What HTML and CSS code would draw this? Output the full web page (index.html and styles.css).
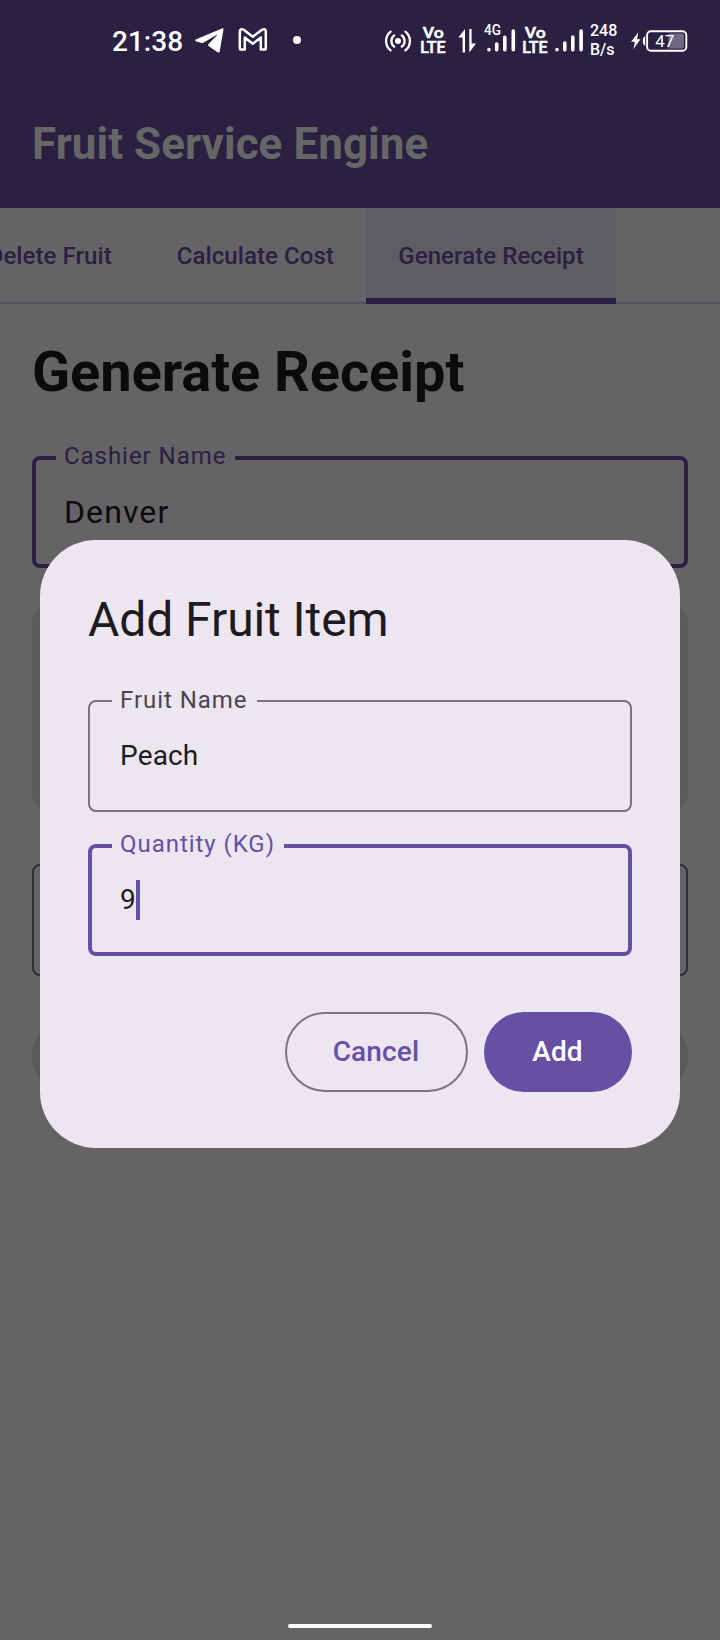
FILE: index.html
```html
<!DOCTYPE html>
<html lang="en">
<head>
<meta charset="utf-8">
<title>Fruit Service Engine</title>
<link rel="stylesheet" href="styles.css">
</head>
<body>
<div class="screen">
  <header class="app-header">
    <div class="status-bar">
      <span class="clock">21:38</span>
      <svg class="icon telegram" width="32" height="28" viewBox="0 0 32 28"><path d="M1.6 13.6 28.5 2.2Q29.6 1.9 29.5 3.3L25.7 25.4Q25.3 27.2 23.6 26.2L14.6 19.9Q13.4 19 14.5 17.9L23 9.2Q23.3 8.6 22.4 8.9L9.4 16.8Q8.4 17.3 7.4 17L1.8 15.2Q.6 14.5 1.6 13.6Z" fill="#fff"/></svg>
      <svg class="icon gmail" width="34" height="28" viewBox="0 0 34 28"><path d="M3.8 22.5V5.4Q4.4 2.4 7.4 3.6L16.8 10.7 26.4 3.6Q29.4 2.4 29.8 5.4V22.5Q29.8 23.5 28.8 23.5H24.8V11.6L16.8 17.7 8.8 11.6V23.5H4.8Q3.8 23.5 3.8 22.5Z" fill="none" stroke="#fff" stroke-width="2.5" stroke-linejoin="round"/></svg>
      <span class="dot"></span>
      <svg class="icon hotspot" width="28" height="28" viewBox="0 0 28 28" fill="none" stroke="#fff" stroke-width="2.3" stroke-linecap="round"><circle cx="14" cy="14" r="3" fill="#fff" stroke="none"/><path d="M10.2 8.4a7 7 0 0 0 0 11.2M17.8 8.4a7 7 0 0 1 0 11.2M6.6 4.6a12 12 0 0 0 0 18.8M21.4 4.6a12 12 0 0 1 0 18.8"/></svg>
      <svg class="icon volte" width="28" height="34" viewBox="0 0 28 34"><text class="outlined" x="2.8" y="14.6" font-size="15.5" textLength="21" lengthAdjust="spacingAndGlyphs">Vo</text><text class="outlined" x=".2" y="29.6" font-size="16" textLength="25.4" lengthAdjust="spacingAndGlyphs">LTE</text></svg>
      <svg class="icon arrows" width="20" height="28" viewBox="0 0 20 28"><path d="M7 2V25.6H4.6V10.6H.4ZM11.3 2h2.3v14.4h4.4L11.3 25.6Z" fill="#fff"/></svg>
      <svg class="icon cell" width="34" height="32" viewBox="0 0 34 32"><text x="0" y="13.4" font-size="14" textLength="17" lengthAdjust="spacingAndGlyphs">4G</text><g stroke="#fff" stroke-width="3.6" stroke-linecap="round"><path d="M5 27.6v.2M12.7 22v5.7M20.8 15.4v12.3M29.3 9v18.7"/></g></svg>
      <svg class="icon volte-two" width="28" height="34" viewBox="0 0 28 34"><text class="outlined" x="2.8" y="14.6" font-size="15.5" textLength="21" lengthAdjust="spacingAndGlyphs">Vo</text><text class="outlined" x=".2" y="29.6" font-size="16" textLength="25.4" lengthAdjust="spacingAndGlyphs">LTE</text></svg>
      <svg class="icon bars" width="31" height="32" viewBox="0 0 31 32"><g stroke="#fff" stroke-width="3.6" stroke-linecap="round"><path d="M3 27.6v.2M10.8 21v6.7M18.8 15v12.7M27.1 9v18.7"/></g></svg>
      <span class="speed"><span>248</span><span>B/s</span></span>
      <svg class="icon battery" width="58" height="26" viewBox="0 0 58 26"><path d="M8.4 4.3 1.1 13.8h3.8L3.5 21.1 10.5 11.3H7Z" fill="#fff"/><path d="M15.2 8.2Q12.8 8.6 12.8 13t2.4 4.6Z" fill="#fff"/><rect x="17.1" y="3.2" width="39.2" height="19.6" rx="3.8" fill="none" stroke="#fff" stroke-width="1.9"/><path d="M38.3 5.6H52q1.9 0 1.9 1.9v11.1q0 1.9-1.9 1.9H38.3Z" fill="#706984"/><text class="regular" x="25.2" y="18.8" font-size="16.5" textLength="19" lengthAdjust="spacingAndGlyphs">47</text></svg>
    </div>
    <div class="app-title">Fruit Service Engine</div>
  </header>
  <nav class="tabs">
    <div class="tab tab-first">Delete Fruit</div>
    <div class="tab">Calculate Cost</div>
    <div class="tab tab-active">Generate Receipt</div>
  </nav>
  <main class="content">
    <h1 class="page-title">Generate Receipt</h1>
    <div class="field field-focused field-dim"><span class="label">Cashier Name</span><span class="value">Denver</span></div>
    <div class="card"></div>
    <div class="field field-dim field-idle"></div>
    <div class="wide-button"></div>
  </main>
  <section class="dialog" role="dialog">
    <h2 class="dialog-title">Add Fruit Item</h2>
    <div class="field"><span class="label">Fruit Name</span><span class="value">Peach</span></div>
    <div class="field field-focused"><span class="label">Quantity (KG)</span><span class="value">9</span><span class="caret"></span></div>
    <div class="actions">
      <div class="btn btn-outline">Cancel</div>
      <div class="btn btn-filled">Add</div>
    </div>
  </section>
  <div class="home-bar"></div>
</div>
</body>
</html>
```

FILE: styles.css
```css
* { box-sizing: border-box; }
body { margin: 0; font-family: Roboto, sans-serif; }
.screen {
  position: relative;
  width: 720px;
  height: 1640px;
  overflow: hidden;
  background: #656366;
}
.app-header { height: 208px; background: #2a2042; }
.status-bar {
  display: flex;
  align-items: center;
  height: 80px;
  padding-left: 112px;
  color: #fff;
}
.status-bar text { fill: #fff; font-family: Roboto, sans-serif; font-weight: 500; }
.status-bar .outlined { stroke: #fff; stroke-width: 0.5px; }
.status-bar .regular { font-weight: 400; }
.icon { display: block; flex: none; overflow: visible; }
.clock { width: 72px; flex: none; font-size: 28px; font-weight: 500; line-height: 32px; padding-top: 3px; }
.telegram { margin-left: 10px; }
.gmail { margin-left: 10px; }
.dot { flex: none; width: 8px; height: 8px; margin-left: 23px; border-radius: 50%; background: #fff; }
.hotspot { margin-left: 83px; margin-top: 1px; }
.volte { margin-left: 8px; }
.arrows { margin-left: 10px; margin-top: 1px; }
.cell { margin-left: 6px; margin-top: -4px; }
.volte-two { margin-left: 4px; }
.bars { margin-left: 4px; margin-top: -4px; }
.speed {
  display: flex;
  flex-direction: column;
  width: 30px;
  margin-left: 5px;
  font-size: 16px;
  font-weight: 500;
  line-height: 19.5px;
}
.battery { margin-left: 10px; margin-top: 1px; }
.app-title {
  padding-left: 32px;
  font-size: 44px;
  font-weight: 700;
  line-height: 128px;
  letter-spacing: 0.05px;
  color: #666;
}
.tabs {
  display: flex;
  justify-content: flex-end;
  height: 96px;
  padding-right: 104px;
  box-shadow: inset 0 -2px #555357;
}
.tab {
  flex: none;
  padding: 0 32px;
  font-size: 24px;
  font-weight: 500;
  line-height: 96px;
  letter-spacing: 0.08px;
  text-align: center;
  white-space: nowrap;
  color: #292042;
}
.tab-first { padding-right: 33px; }
.tab-active { width: 250px; background: #5f5d62; box-shadow: inset 0 -6px #292042; }
.content { padding: 32px; }
.page-title {
  margin: 0;
  font-size: 56px;
  font-weight: 700;
  line-height: 72px;
  letter-spacing: -0.08px;
  color: #0b0b0c;
}
.field {
  position: relative;
  display: flex;
  align-items: center;
  height: 112px;
  padding-left: 30px;
  border: 2px solid #79747e;
  border-radius: 8px;
  font-size: 28px;
  letter-spacing: 0.15px;
  color: #1d1b20;
}
.field-focused { padding-left: 28px; border: 4px solid #6750a4; }
.label {
  position: absolute;
  top: -14px;
  left: 22px;
  padding: 0 9px 0 8px;
  font-size: 24px;
  line-height: 24px;
  letter-spacing: 0.96px;
  white-space: nowrap;
  background: #ece6f0;
  color: #49454f;
}
.field-focused .label { top: -16px; left: 20px; color: #6750a4; }
.dialog .value { padding-bottom: 2px; }
.caret { width: 4px; height: 40px; background: #6750a4; }
.field-dim { border-color: #292042; font-size: 32px; letter-spacing: 1.1px; color: #0b0b0c; }
.page-title + .field { margin-top: 48px; }
.field-dim .label { background: #656366; }
.field-dim.field-focused .label { color: #292042; }
.field-idle { border-color: #302e32; }
.card { height: 216px; margin: 32px 0 48px; border-radius: 24px; background: #5c5a5d; }
.wide-button { height: 80px; margin-top: 40px; border-radius: 40px; background: #5a585b; }
.dialog {
  position: absolute;
  top: 540px;
  left: 40px;
  width: 640px;
  height: 608px;
  padding: 48px;
  border-radius: 56px;
  background: #ece6f0;
}
.dialog-title {
  margin: 0 0 48px;
  font-size: 48px;
  font-weight: 400;
  line-height: 64px;
  letter-spacing: -0.07px;
  color: #1d1b20;
}
.dialog .field + .field { margin-top: 32px; }
.actions { display: flex; justify-content: flex-end; gap: 16px; margin-top: 56px; }
.btn {
  height: 80px;
  border-radius: 40px;
  font-size: 28px;
  font-weight: 500;
  line-height: 80px;
  letter-spacing: 0.15px;
  text-align: center;
}
.btn-outline { width: 183px; padding-right: 1px; border: 2px solid #79747e; line-height: 76px; color: #6750a4; }
.btn-filled { width: 148px; padding-right: 1px; background: #6750a4; color: #fff; }
.home-bar {
  position: absolute;
  left: 288px;
  bottom: 12px;
  width: 144px;
  height: 4px;
  border-radius: 2px;
  background: #fff;
}
```
